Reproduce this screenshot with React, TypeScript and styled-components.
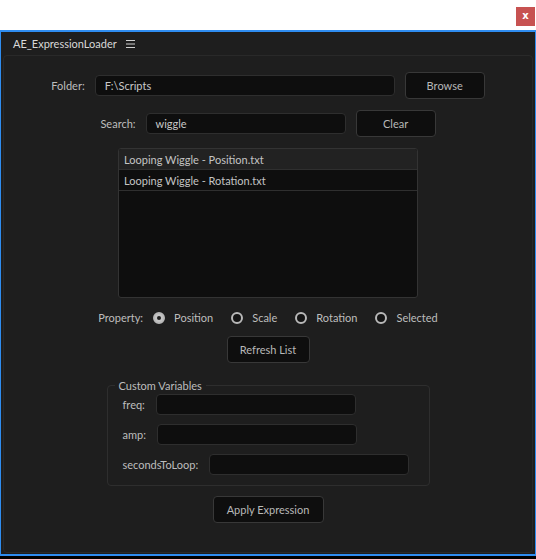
import styled, { createGlobalStyle } from "styled-components";

const Global = createGlobalStyle`
  html, body { margin: 0; padding: 0; background: #000; }
  body { font-family: Lato, "Noto Sans", sans-serif; font-size: 11px; color: #bdbdbd; }
  * { box-sizing: border-box; }
`;

const TopStrip = styled.div`
  height: 30px;
  background: #fff;
  display: flex;
  justify-content: flex-end;
  padding: 7px 1px 0 0;
`;

const CloseBtn = styled.div`
  width: 19px;
  height: 19px;
  background: #c75251;
  color: #fff;
  font: bold 10px "DejaVu Sans", sans-serif;
  display: flex;
  align-items: center;
  justify-content: center;
  padding-bottom: 2px;
`;

const Window = styled.div`
  height: 526px;
  border: 1px solid #2f8df0;
  border-top-width: 2px;
  border-bottom-width: 2px;
  background: #1e1e1e;
  display: flex;
  flex-direction: column;
`;

const TitleBar = styled.div`
  height: 23px;
  display: flex;
  align-items: center;
  gap: 9px;
  padding-left: 12px;
  color: #d8d8d8;
  font-size: 11px;
`;

const Body = styled.div`
  flex: 1;
  margin: 0 2px 1px 2px;
  border: 1px solid #292929;
  border-radius: 4px;
  display: flex;
  flex-direction: column;
  align-items: center;
  padding-top: 16px;
`;

const Row = styled.div<{ $mt?: number }>`
  display: flex;
  align-items: center;
  margin-top: ${(p) => p.$mt ?? 0}px;
`;

const Label = styled.span<{ $gap?: number }>`
  color: #bdbdbd;
  margin-right: ${(p) => p.$gap ?? 10}px;
`;

const Field = styled.div<{ $w: number }>`
  width: ${(p) => p.$w}px;
  height: 21px;
  background: #0e0e0e;
  border: 1px solid #2e2e2e;
  border-radius: 4px;
  padding-left: 9px;
  display: flex;
  align-items: center;
  color: #c8c8c8;
`;

const Button = styled.div<{ $w: number; $ml?: number }>`
  width: ${(p) => p.$w}px;
  height: 27px;
  margin-left: ${(p) => p.$ml ?? 0}px;
  background: #0e0e0e;
  border: 1px solid #383838;
  border-radius: 4px;
  display: flex;
  align-items: center;
  justify-content: center;
  color: #b8b8b8;
`;

const List = styled.div`
  width: 300px;
  height: 150px;
  margin-top: 11px;
  background: #0e0e0e;
  border: 1px solid #333;
  border-radius: 3px;
  overflow: hidden;
`;

const ListItem = styled.div<{ $selected?: boolean }>`
  height: 21px;
  padding-left: 5px;
  display: flex;
  align-items: center;
  background: ${(p) => (p.$selected ? "#222" : "#0e0e0e")};
  border-bottom: 1px solid #2f2f2f;
  color: #c4c4c4;
`;

const RadioGroup = styled.div`
  display: flex;
  align-items: center;
  gap: 18px;
  margin-left: 10px;
`;

const RadioOpt = styled.label`
  display: flex;
  align-items: center;
  gap: 9px;
`;

const RadioDot = styled.span<{ $on?: boolean }>`
  width: 12px;
  height: 12px;
  border-radius: 50%;
  background: ${(p) => (p.$on ? "#c4c4c4" : "#141414")};
  border: 2px solid #b8b8b8;
  display: flex;
  align-items: center;
  justify-content: center;
  &::after {
    content: "";
    width: 4px;
    height: 4px;
    border-radius: 50%;
    background: ${(p) => (p.$on ? "#1e1e1e" : "transparent")};
  }
`;

const Group = styled.fieldset`
  width: 323px;
  margin: 16px 0 0 0;
  padding: 2px 0 11px 15px;
  border: 1px solid #2e2e2e;
  border-radius: 4px;
  display: flex;
  flex-direction: column;
  gap: 10px;
`;

const Legend = styled.legend`
  padding: 0 4px;
  margin-left: -8px;
  color: #bdbdbd;
`;

const VarRow = styled.div`
  display: flex;
  align-items: center;
  height: 20px;
`;

const MenuIcon = () => (
  <svg width="9" height="8" viewBox="0 0 9 8">
    <path d="M0 0.5H9M0 4H9M0 7.5H9" stroke="#cfcfcf" strokeWidth="1" />
  </svg>
);

const props = ["Position", "Scale", "Rotation", "Selected"];

export default function App() {
  return (
    <>
      <Global />
      <TopStrip>
        <CloseBtn>x</CloseBtn>
      </TopStrip>
      <Window>
        <TitleBar>
          AE_ExpressionLoader <MenuIcon />
        </TitleBar>
        <Body>
          <Row>
            <Label>Folder:</Label>
            <Field $w={300}>F:\Scripts</Field>
            <Button $w={80} $ml={10}>Browse</Button>
          </Row>
          <Row $mt={11}>
            <Label>Search:</Label>
            <Field $w={200}>wiggle</Field>
            <Button $w={80} $ml={10}>Clear</Button>
          </Row>
          <List>
            <ListItem $selected>Looping Wiggle - Position.txt</ListItem>
            <ListItem>Looping Wiggle - Rotation.txt</ListItem>
          </List>
          <Row $mt={13}>
            <Label $gap={0}>Property:</Label>
            <RadioGroup>
              {props.map((p, i) => (
                <RadioOpt key={p}>
                  <RadioDot $on={i === 0} />
                  {p}
                </RadioOpt>
              ))}
            </RadioGroup>
          </Row>
          <Row $mt={12}>
            <Button $w={83}>Refresh List</Button>
          </Row>
          <Group>
            <Legend>Custom Variables</Legend>
            <VarRow>
              <Label $gap={11}>freq:</Label>
              <Field $w={200} />
            </VarRow>
            <VarRow>
              <Label $gap={11}>amp:</Label>
              <Field $w={200} />
            </VarRow>
            <VarRow>
              <Label $gap={11}>secondsToLoop:</Label>
              <Field $w={200} />
            </VarRow>
          </Group>
          <Row $mt={10}>
            <Button $w={111}>Apply Expression</Button>
          </Row>
        </Body>
      </Window>
    </>
  );
}
